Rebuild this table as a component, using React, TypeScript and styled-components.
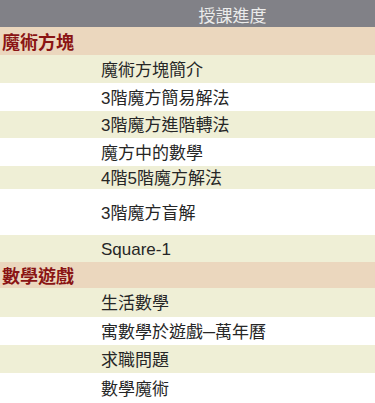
import React from "react";
import styled, { createGlobalStyle } from "styled-components";

const Global = createGlobalStyle`
  html, body { margin: 0; padding: 0; background: #ffffff; }
  body { font-family: "Liberation Sans", "Noto Sans CJK TC", sans-serif; }
`;

const Table = styled.div`
  width: 375px;
  display: flex;
  flex-direction: column;
`;

const HeaderRow = styled.div`
  height: 27px;
  background: #818187;
  display: grid;
  grid-template-columns: 90px 1fr;
  align-items: center;
`;

const HeaderCell = styled.div`
  color: #ececec;
  font-size: 17px;
  text-align: center;
  font-family: "Noto Sans CJK TC", sans-serif;
  line-height: 1;
  padding-top: 1px;
`;

const CategoryRow = styled.div<{ $h: number }>`
  height: ${(p) => p.$h}px;
  background: #ebd7be;
  display: flex;
  align-items: center;
  padding-left: 2px;
  color: #8a1414;
  font-size: 18px;
  font-weight: 700;
  font-family: "Noto Sans CJK TC", serif;
  line-height: 1;
`;

const ItemRow = styled.div<{ $alt: boolean; $h: number }>`
  height: ${(p) => p.$h}px;
  background: ${(p) => (p.$alt ? "#efefd6" : "#ffffff")};
  display: grid;
  grid-template-columns: 101px 1fr;
  align-items: center;
`;

const ItemText = styled.div`
  grid-column: 2;
  color: #262626;
  font-size: 17px;
  line-height: 1;
  font-family: "Liberation Sans", "Noto Sans CJK TC", sans-serif;
  padding-top: 2px;
`;

type Item = { text: string; h: number };
type Group = { title: string; h: number; items: Item[] };

const groups: Group[] = [
  {
    title: "魔術方塊",
    h: 28,
    items: [
      { text: "魔術方塊簡介", h: 28 },
      { text: "3階魔方簡易解法", h: 28 },
      { text: "3階魔方進階轉法", h: 27 },
      { text: "魔方中的數學", h: 28 },
      { text: "4階5階魔方解法", h: 23 },
      { text: "3階魔方盲解", h: 46 },
      { text: "Square-1", h: 27 },
    ],
  },
  {
    title: "數學遊戲",
    h: 26,
    items: [
      { text: "生活數學", h: 29 },
      { text: "寓數學於遊戲─萬年曆", h: 28 },
      { text: "求職問題", h: 28 },
      { text: "數學魔術", h: 30 },
    ],
  },
];

export default function App() {
  return (
    <>
      <Global />
      <Table>
        <HeaderRow>
          <div />
          <HeaderCell>授課進度</HeaderCell>
        </HeaderRow>
        {groups.map((g) => (
          <React.Fragment key={g.title}>
            <CategoryRow $h={g.h}>{g.title}</CategoryRow>
            {g.items.map((it, i) => (
              <ItemRow key={it.text} $alt={i % 2 === 0} $h={it.h}>
                <ItemText>{it.text}</ItemText>
              </ItemRow>
            ))}
          </React.Fragment>
        ))}
      </Table>
    </>
  );
}
